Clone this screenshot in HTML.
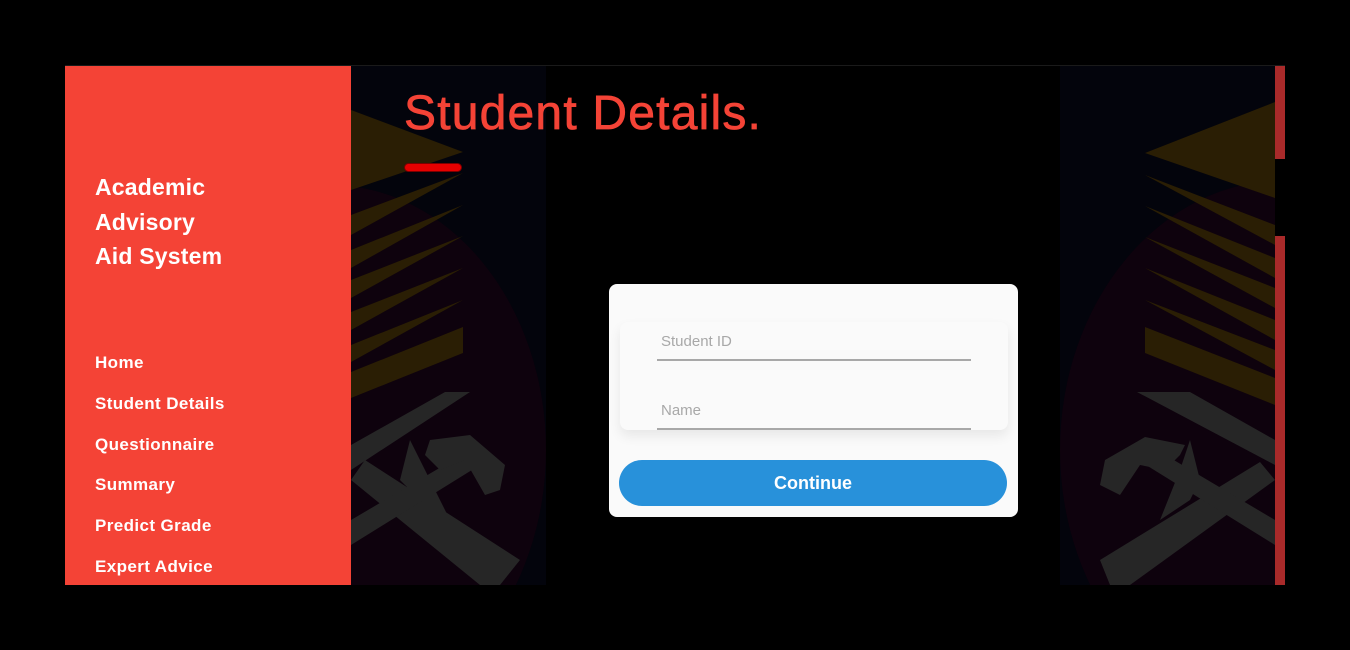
<!DOCTYPE html>
<html style="overflow:hidden"><head><meta charset="utf-8"><style>
*{margin:0;padding:0;box-sizing:border-box}
html,body{width:1350px;height:650px;overflow:hidden}
body{background:#000;position:relative;font-family:"Liberation Sans",sans-serif}
.side{position:absolute;left:65px;top:66px;width:286px;height:519px;background:#f44336;color:#fff}
.brand{position:absolute;left:30px;top:104px;font-size:23px;font-weight:bold;line-height:34.5px;letter-spacing:0.2px}
.nav{position:absolute;left:30px;top:287px;font-size:17px;font-weight:bold;letter-spacing:0.4px}
.nav div{height:40.8px}
.title{position:absolute;left:404px;top:86px;font-size:48px;color:#f44336;letter-spacing:1.2px;-webkit-text-stroke:0.7px #f44336;white-space:nowrap}
.ul{position:absolute;left:404px;top:163px;width:58px;height:9px;border-radius:5px;background:#e50000;border:1.5px solid #7a0000}
.card{position:absolute;left:609px;top:284px;width:409px;height:233px;background:#fafafa;border-radius:8px}
.inner{position:absolute;left:11px;top:38px;width:388px;height:108px;background:#fafafa;border-radius:8px;box-shadow:0 6px 12px rgba(0,0,0,0.08)}
.f{position:absolute;left:37px;width:314px;border-bottom:2px solid #a8a8a8;color:#a8a8a8;font-size:15px;padding-left:4px;padding-top:3px}
.btn{position:absolute;left:10px;top:176px;width:388px;height:46px;background:#2891da;border-radius:23px;color:#fff;font-weight:bold;font-size:18px;text-align:center;line-height:46px}
</style></head><body>
<div style="position:absolute;left:65px;top:65px;width:1220px;height:1px;background:#1a1a1a"></div>
<svg style="position:absolute;left:0;top:0;display:block" width="1350" height="650">
<rect x="351" y="66" width="195" height="519" fill="#03040c"/>
<clipPath id="cl"><rect x="351" y="66" width="195" height="519"/></clipPath>
<g clip-path="url(#cl)">
<ellipse cx="330" cy="450" rx="216" ry="265" fill="#0e020d"/>
<g fill="#2a1e04">
<polygon points="351,110 463,152 351,190"/>
<polygon points="463,173 351,215 351,235"/>
<polygon points="463,205 351,250 351,268"/>
<polygon points="463,236 351,280 351,298"/>
<polygon points="463,268 351,312 351,330"/>
<polygon points="463,300 351,345 351,362"/>
<polygon points="463,327 463,353 351,398 351,372"/>
</g>
<g fill="#262626">
<polygon points="470,392 445,392 351,445 351,470"/>
<polygon points="351,480 365,460 520,560 500,585 480,585"/>
<polygon points="351,520 470,450 480,465 351,545"/>
<polygon points="430,440 470,435 505,465 500,490 485,495 465,460 440,470 425,455"/>
<polygon points="400,480 410,440 425,470 450,520 420,500"/>
</g>
</g>
<rect x="1060" y="66" width="215" height="519" fill="#03040c"/>
<clipPath id="cr"><rect x="1060" y="66" width="215" height="519"/></clipPath>
<g clip-path="url(#cr)">
<ellipse cx="1285" cy="450" rx="225" ry="270" fill="#0e020d"/>
<g fill="#2a1e04">
<polygon points="1275,102 1145,153 1275,198"/>
<polygon points="1145,175 1275,225 1275,245"/>
<polygon points="1145,206 1275,258 1275,278"/>
<polygon points="1145,237 1275,288 1275,308"/>
<polygon points="1145,268 1275,320 1275,340"/>
<polygon points="1145,300 1275,350 1275,370"/>
<polygon points="1145,327 1145,353 1275,405 1275,378"/>
</g>
<g fill="#262626">
<polygon points="1137,392 1190,392 1275,440 1275,465"/>
<polygon points="1275,480 1260,462 1100,560 1110,585 1130,585"/>
<polygon points="1275,520 1140,440 1130,455 1275,545"/>
<polygon points="1185,445 1145,437 1105,460 1100,485 1120,495 1140,465 1165,470 1180,455"/>
<polygon points="1200,480 1190,440 1180,470 1160,520 1190,500"/>
</g>
</g>
<rect x="1275" y="66" width="10" height="93" fill="#a92a2a"/>
<rect x="1275" y="236" width="10" height="349" fill="#a92a2a"/>
</svg>
<div class="side">
<div class="brand">Academic<br>Advisory<br>Aid System</div>
<div class="nav"><div>Home</div><div>Student Details</div><div>Questionnaire</div><div>Summary</div><div>Predict Grade</div><div>Expert Advice</div></div>
</div>
<div class="title">Student Details.</div>
<div class="ul"></div>
<div class="card">
<div class="inner">
<div class="f" style="top:8px;height:31px">Student ID</div>
<div class="f" style="top:77px;height:31px">Name</div>
</div>
<div class="btn">Continue</div>
</div>
</body></html>
